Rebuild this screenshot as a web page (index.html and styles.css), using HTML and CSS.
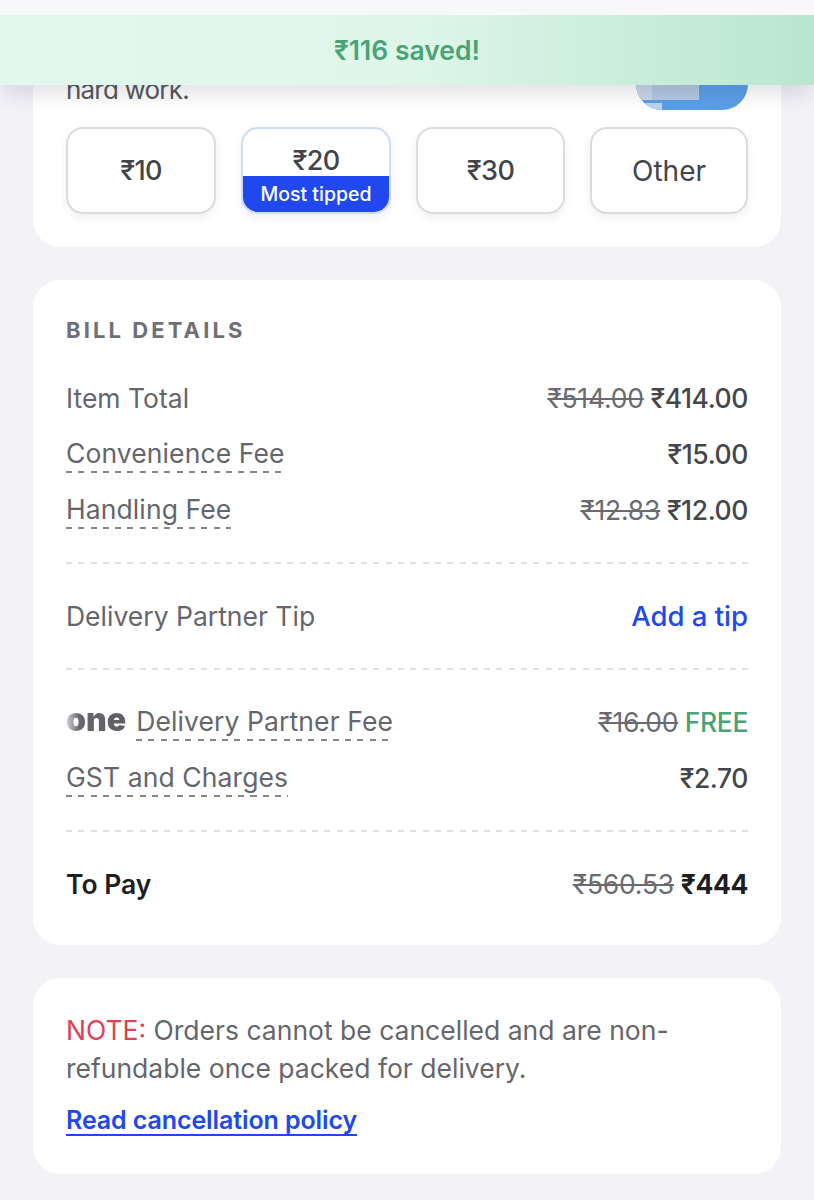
FILE: index.html
```html
<!DOCTYPE html>
<html lang="en">
<head>
<meta charset="utf-8">
<title>Bill details</title>
<link rel="stylesheet" href="styles.css">
</head>
<body>
<div class="toast">₹116 saved!</div>
<main class="page">
  <section class="card tip-card">
    <div class="tip-intro">
      <p class="tip-text">hard work.</p>
      <div class="tip-art"><span class="art-c"></span><span class="art-a"></span><span class="art-b"></span></div>
    </div>
    <div class="tips">
      <button class="tip">₹10</button>
      <button class="tip tip-top"><span class="tip-val">₹20</span><span class="tip-tag">Most tipped</span></button>
      <button class="tip">₹30</button>
      <button class="tip tip-other">Other</button>
    </div>
  </section>
  <section class="card bill">
    <h2 class="bill-title">BILL DETAILS</h2>
    <div class="row"><span>Item Total</span><span class="val"><s>₹514.00</s> ₹414.00</span></div>
    <div class="row"><span class="dash">Convenience Fee</span><span class="val">₹15.00</span></div>
    <div class="row"><span class="dash">Handling Fee</span><span class="val"><s>₹12.83</s> ₹12.00</span></div>
    <hr class="sep">
    <div class="row"><span>Delivery Partner Tip</span><span class="add">Add a tip</span></div>
    <hr class="sep">
    <div class="row"><span class="with-logo"><span class="one">one</span><span class="dash">Delivery Partner Fee</span></span><span class="val"><s>₹16.00</s> <span class="free">FREE</span></span></div>
    <div class="row"><span class="dash">GST and Charges</span><span class="val">₹2.70</span></div>
    <hr class="sep">
    <div class="row total"><span>To Pay</span><span class="val"><s>₹560.53</s> <b>₹444</b></span></div>
  </section>
  <section class="card note">
    <p class="note-text"><span class="note-label">NOTE:</span> Orders cannot be cancelled and are non-refundable once packed for delivery.</p>
    <a class="policy" href="#">Read cancellation policy</a>
  </section>
</main>
</body>
</html>
```
FILE: styles.css
```css
* { box-sizing: border-box; }
html, body { margin: 0; padding: 0; }
body {
  width: 814px;
  height: 1200px;
  overflow: hidden;
  background: linear-gradient(#f8f8fb 0 15px, #f2f2f7 15px);
  font-family: "Inter", "Noto Sans", sans-serif;
  color: #55565c;
  position: relative;
}
.toast {
  position: absolute;
  top: 15px;
  left: 0;
  width: 814px;
  height: 70px;
  display: flex;
  align-items: center;
  justify-content: center;
  background: linear-gradient(90deg, #e1f8ee 0%, #def6ea 50%, #b9e6cf 100%);
  color: #4aa377;
  font-size: 26.5px;
  font-weight: 600;
  box-shadow: 0 14px 18px -4px rgba(40, 44, 63, 0.13);
  z-index: 2;
}
.page {
  display: flex;
  flex-direction: column;
  gap: 33px;
  padding: 40px 33px 0;
}
.card {
  background: #fff;
  border-radius: 27px;
  padding: 0 33px;
}
.tip-card { height: 207px; }
.tip-intro {
  height: 87px;
  display: flex;
  justify-content: space-between;
  align-items: flex-end;
}
.tip-text {
  margin: 0 0 22px;
  font-size: 26px;
  line-height: 30px;
  letter-spacing: -0.8px;
}
.tip-art {
  position: relative;
  width: 112px;
  height: 70px;
  margin-bottom: 17px;
  border-radius: 0 0 26px 26px;
  background: #5a9fe8;
  overflow: hidden;
}
.art-c { position: absolute; left: 0; top: 0; width: 16px; height: 60px; background: #c8d6e8; }
.art-a { position: absolute; left: 16px; top: 0; width: 47px; height: 60px; background: #b3c8e2; }
.art-b { position: absolute; left: 4px; bottom: 0; width: 22px; height: 7px; background: #bcd4ef; }
.tips {
  display: grid;
  grid-template-columns: 150px 150px 149px 158px;
  gap: 25px;
  height: 87px;
}
.tip {
  font: inherit;
  font-size: 27px;
  font-weight: 500;
  letter-spacing: -0.6px;
  color: #43444a;
  background: #fff;
  border: 2px solid #dcdce0;
  border-radius: 17px;
  box-shadow: 0 4px 9px rgba(40, 44, 63, 0.07);
  padding: 0;
  overflow: hidden;
}
.tip-top {
  display: flex;
  flex-direction: column;
  border-color: #cfdaf7;
}
.tip-val {
  height: 47px;
  display: flex;
  align-items: center;
  justify-content: center;
  padding-top: 16px;
}
.tip-tag {
  flex: 1;
  display: flex;
  align-items: center;
  justify-content: center;
  background: #2148ee;
  color: #fff;
  font-size: 19.5px;
  font-weight: 500;
  letter-spacing: 0;
}
.tip-other { font-weight: 400; letter-spacing: 0; font-size: 28px; }
.bill { height: 665px; padding-top: 37px; }
.bill-title {
  margin: 0 0 39px;
  font-size: 22px;
  line-height: 26px;
  font-weight: 700;
  letter-spacing: 3.1px;
  color: #6f7076;
}
.row {
  display: flex;
  justify-content: space-between;
  align-items: center;
  height: 32px;
  margin-bottom: 24px;
  font-size: 26.5px;
  color: #65666c;
  white-space: nowrap;
}
.val { font-weight: 550; color: #45464c; letter-spacing: -0.4px; }
.val s { font-weight: 400; color: #6a6b71; letter-spacing: -0.2px; }
.dash {
  padding-bottom: 4px;
  line-height: 31px;
  margin-top: 3px;
  letter-spacing: 0.1px;
  background: repeating-linear-gradient(90deg, #85868c 0 6px, transparent 6px 12.3px) left bottom / 100% 2px no-repeat;
}
.sep {
  border: 0;
  height: 2px;
  background: repeating-linear-gradient(90deg, #e0e0e4 0 6px, transparent 6px 12.3px);
  margin: 36px 0 36px;
}
.add { color: #2148ee; font-weight: 500; font-size: 27.5px; }
.with-logo { display: flex; align-items: center; gap: 10px; }
.one {
  font-size: 32px;
  line-height: 32px;
  font-weight: 900;
  letter-spacing: 0;
  margin-top: -4px;
  background: linear-gradient(90deg, #d6d6da 0%, #68676f 22%, #5f5e66 100%);
  -webkit-background-clip: text;
  background-clip: text;
  color: transparent;
}
.free { color: #4aa377; }
.total { color: #1d1e22; font-weight: 600; margin-bottom: 0; }
.total b { color: #1d1e22; font-weight: 700; }
.note { height: 196px; padding-top: 33px; }
.note-text {
  margin: 0;
  font-size: 26.5px;
  line-height: 38px;
  color: #65666c;
}
.note-label { color: #e0405c; }
.policy {
  display: inline-block;
  margin-top: 19px;
  color: #2148ee;
  font-size: 25px;
  line-height: 28px;
  font-weight: 600;
  letter-spacing: -0.1px;
  text-decoration: none;
  border-bottom: 2px solid #2148ee;
}
```
